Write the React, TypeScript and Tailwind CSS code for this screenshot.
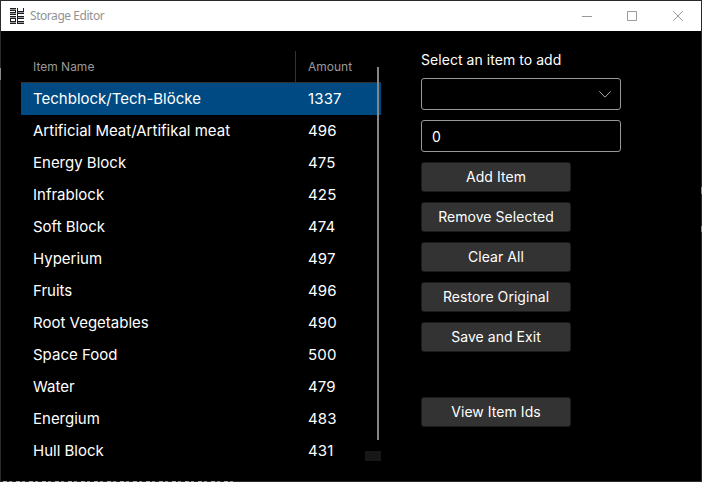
import React from "react";

const rows: [string, string][] = [
  ["Techblock/Tech-Blöcke", "1337"],
  ["Artificial Meat/Artifikal meat", "496"],
  ["Energy Block", "475"],
  ["Infrablock", "425"],
  ["Soft Block", "474"],
  ["Hyperium", "497"],
  ["Fruits", "496"],
  ["Root Vegetables", "490"],
  ["Space Food", "500"],
  ["Water", "479"],
  ["Energium", "483"],
  ["Hull Block", "431"],
];

function AppIcon() {
  return (
    <svg width="15" height="16" viewBox="0 0 15 16" fill="none" stroke="#1c1c1c" shapeRendering="crispEdges">
      <path d="M0 .5H6M0 2.5H6M0 4.5H6M0 6.5H6M5.5 0V7" />
      <path d="M7.5 0V16M13.5 0V6M8 3.5H14M8 5.5H14" />
      <path d="M0 8.5H6M0 10.5H6M0 13.5H6M0 15.5H6M.5 8V16M5.5 8V16" />
      <path d="M8 8.5H14M8 10.5H14M8 13.5H14M8 15.5H14" />
      <path d="M0 1.5H6M0 5.5H6M0 9.5H6M0 14.5H6M8 4.5H14M8 9.5H14M8 14.5H14" stroke="#9a9a9a" />
    </svg>
  );
}

function TitleBar() {
  return (
    <header className="flex h-[30px] items-center bg-white pl-[9px] pr-[17px]">
      <AppIcon />
      <span className="ml-[5px] grow font-['Noto_Sans',sans-serif] text-[12px] leading-[16px] tracking-[-0.45px] text-[#929292]">
        Storage Editor
      </span>
      <svg width="102" height="11" viewBox="0 0 102 11" fill="none" stroke="#999999">
        <path d="M0 5.5H10" />
        <path d="M45.5 .5H54.5V9.5H45.5Z" />
        <path d="M91.2 .2L100.8 9.8M100.8 .2L91.2 9.8" />
      </svg>
    </header>
  );
}

function ItemTable() {
  return (
    <section className="relative w-[360px]">
      <div className="flex h-[32px] border-b border-[#333333] text-[12px] leading-[31px] text-[#999999]">
        <div className="w-[275px] border-r border-[#333333] pl-[12px]">Item Name</div>
        <div className="pl-[12px]">Amount</div>
      </div>
      {rows.map(([name, amount], i) => (
        <div
          key={name}
          className={`flex h-[32px] text-[15px] leading-[32px] text-white ${i === 0 ? "bg-[#004a83]" : ""}`}
        >
          <div className="w-[275px] pl-[12px]">{name}</div>
          <div className="pl-[12px] tracking-[0.15px]">{amount}</div>
        </div>
      ))}
      <div className="absolute left-[356px] top-[16px] h-[373px] w-[2px] bg-[#868686]" />
      <div className="absolute left-[344px] top-[400px] h-[10px] w-[16px] bg-[#171717]" />
    </section>
  );
}

function Button({ label }: { label: string }) {
  return (
    <button className="h-[30px] w-[150px] rounded-[3px] border border-[#1c1c1c] bg-[#333333] text-[14px] leading-[28px] tracking-[0.05px] text-white">
      {label}
    </button>
  );
}

function Controls() {
  return (
    <section className="ml-[40px] flex flex-col items-start gap-[10px]">
      <label className="-mb-px h-[18px] text-[14px] leading-[18px] tracking-[0.05px]">Select an item to add</label>
      <div className="flex h-[32px] w-[200px] items-center justify-end rounded-[3px] border border-[#999999] pr-[9px]">
        <svg width="12" height="7" viewBox="0 0 12 7" fill="none" stroke="#a8a8a8">
          <path d="M.3 .3L6 6.2L11.7 .3" />
        </svg>
      </div>
      <div className="h-[32px] w-[200px] rounded-[3px] border border-[#999999] pl-[10px] text-[14px] leading-[31px]">0</div>
      <Button label="Add Item" />
      <Button label="Remove Selected" />
      <Button label="Clear All" />
      <Button label="Restore Original" />
      <Button label="Save and Exit" />
      <div className="mt-[35px] flex">
        <Button label="View Item Ids" />
      </div>
    </section>
  );
}

export default function App() {
  return (
    <main className="relative h-[482px] w-[702px] border border-[#2b2b2b] bg-black font-['Inter',sans-serif] text-white">
      <TitleBar />
      <div className="flex pl-[20px] pt-[20px]">
        <ItemTable />
        <Controls />
      </div>
      {/* Slivers of the desktop text showing along the window's edge */}
      <div className="absolute -bottom-px left-[2px] h-px w-[232px] bg-[repeating-linear-gradient(90deg,#b0a8a8_0_4px,#2b2b2b_4px_6px,#9a9292_6px_9px,#2b2b2b_9px_13px)]" />
      <div className="absolute -left-px top-[67px] h-[12px] w-px bg-[#8a8a8a]" />
      <div className="absolute -right-px top-[186px] h-[7px] w-px bg-[#8a8a8a]" />
      <div className="absolute -right-px top-[225px] h-[6px] w-px bg-[#8a8a8a]" />
    </main>
  );
}
